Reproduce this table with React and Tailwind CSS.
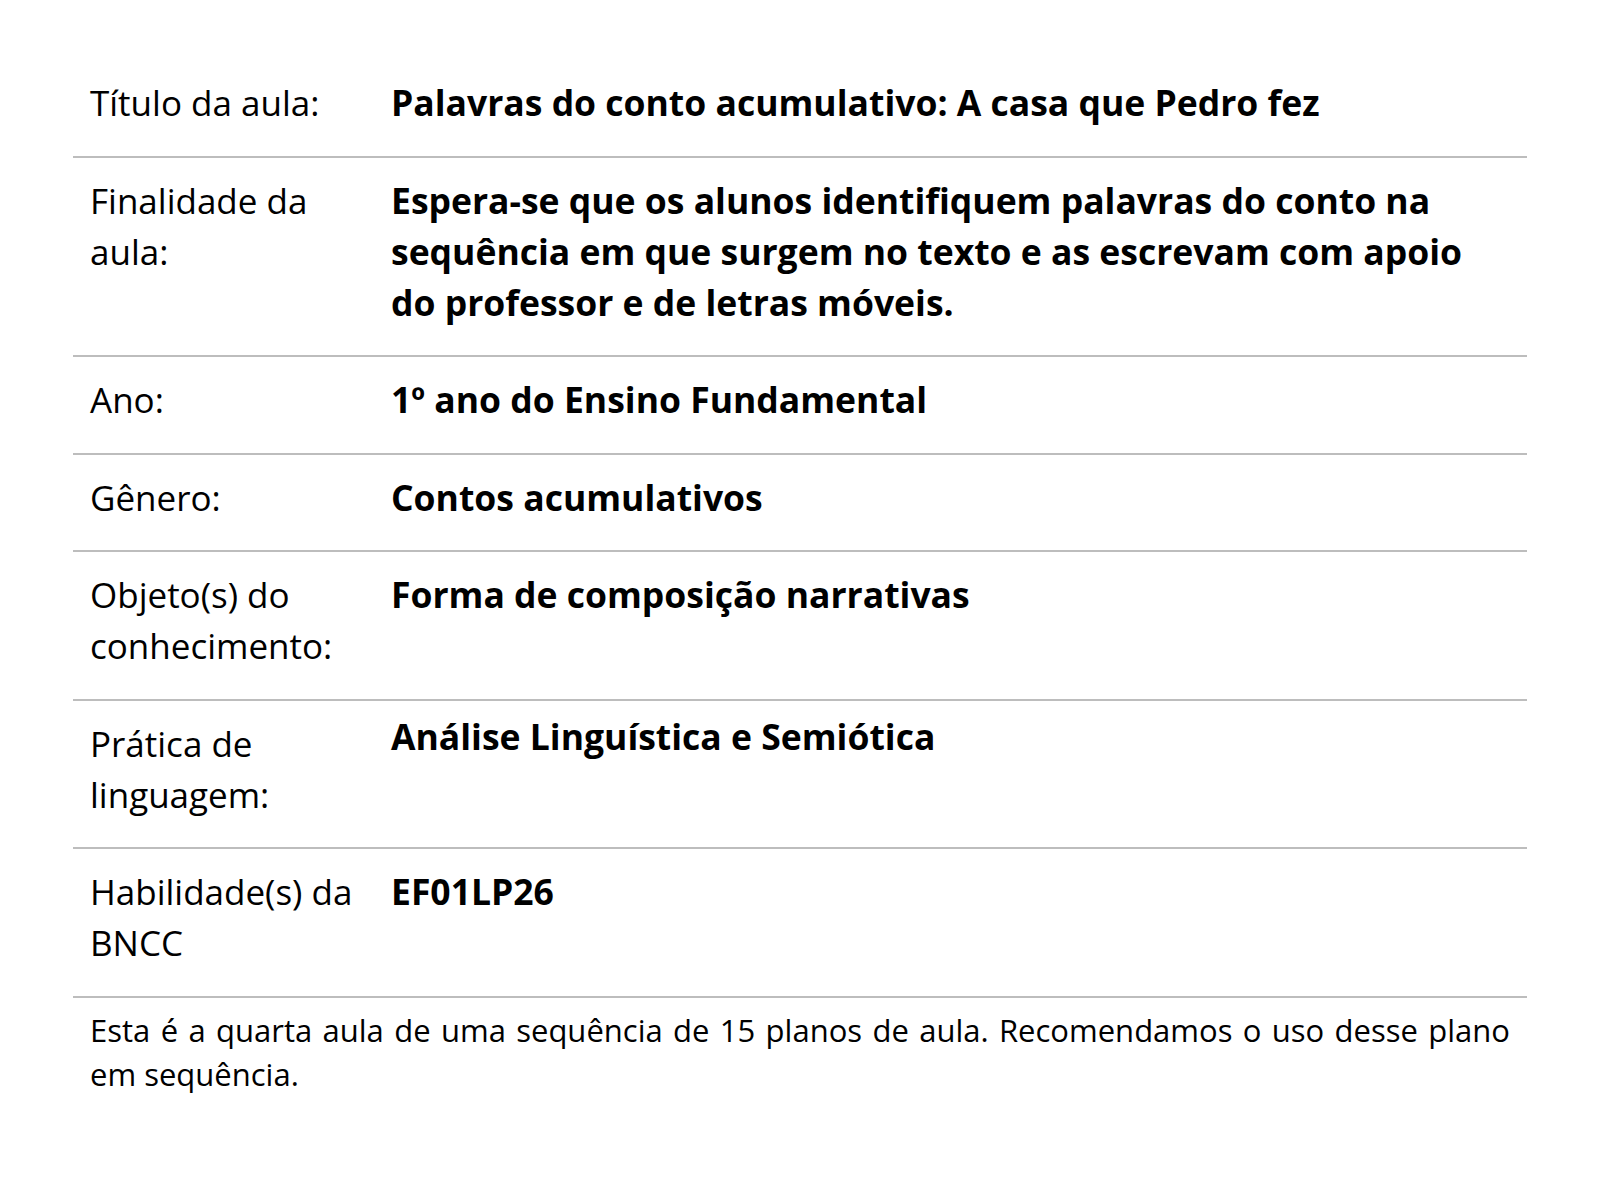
import React from 'react';

const rows = [
  { label: 'Título da aula:', value: 'Palavras do conto acumulativo: A casa que Pedro fez' },
  {
    label: 'Finalidade da aula:',
    value:
      'Espera-se que os alunos identifiquem palavras do conto na sequência em que surgem no texto e as escrevam com apoio do professor e de letras móveis.',
  },
  { label: 'Ano:', value: '1º ano do Ensino Fundamental' },
  { label: 'Gênero:', value: 'Contos acumulativos' },
  { label: 'Objeto(s) do conhecimento:', value: 'Forma de composição narrativas' },
  { label: 'Prática de linguagem:', value: 'Análise Linguística e Semiótica', raised: true },
  { label: 'Habilidade(s) da BNCC', value: 'EF01LP26' },
];

const App = () => {
  return (
    <div className="min-h-screen bg-white text-black" style={{ fontFamily: '"Open Sans", "Noto Sans", sans-serif' }}>
      <div className="mx-auto w-[1454px] pt-[60px]">
        {/* Lesson info table */}
        {rows.map((row) => (
          <div
            key={row.label}
            className="grid grid-cols-[318px_1fr] border-b-2 border-[#bdbdbd] pt-[17.25px] pb-[27.25px] text-[35px] leading-[51px]"
          >
            <div className="pl-[17px] pr-[14px]">{row.label}</div>
            <div className={`pr-[40px] text-[35.5px] font-bold ${row.raised ? '-mt-[7px]' : ''}`}>{row.value}</div>
          </div>
        ))}

        {/* Footer note */}
        <p className="mt-[10px] px-[17px] text-justify text-[31px] leading-[44px]">
          Esta é a quarta aula de uma sequência de 15 planos de aula. Recomendamos o uso desse plano em sequência.
        </p>
      </div>
    </div>
  );
};

export default App;
